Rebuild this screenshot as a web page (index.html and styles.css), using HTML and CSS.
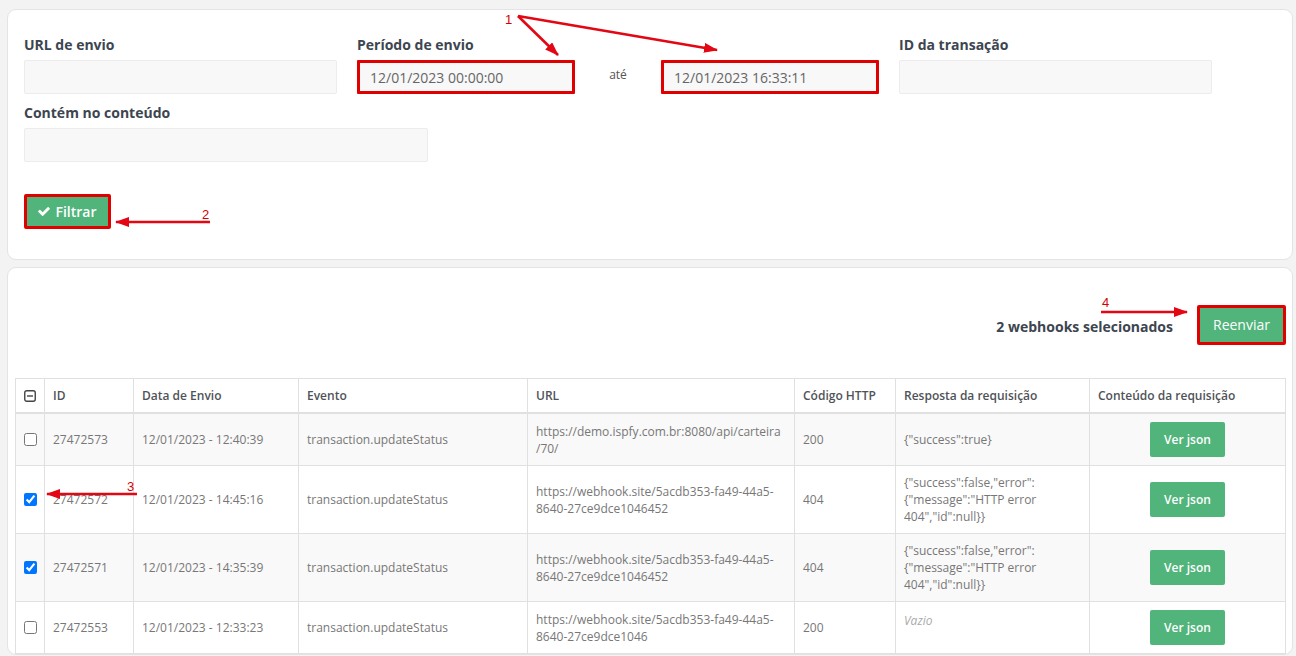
FILE: index.html
```html
<!DOCTYPE html>
<html lang="pt-BR">
<head>
<meta charset="utf-8">
<title>Webhooks</title>
<link rel="stylesheet" href="styles.css">
</head>
<body>
<div class="page">
  <section class="card filters">
    <div class="form-row">
      <div class="field">
        <label class="label">URL de envio</label>
        <input class="input" type="text">
      </div>
      <div class="field">
        <label class="label">Período de envio</label>
        <div class="period">
          <input class="input hl" type="text" value="12/01/2023 00:00:00">
          <span class="ate">até</span>
          <input class="input hl" type="text" value="12/01/2023 16:33:11">
        </div>
      </div>
      <div class="field">
        <label class="label">ID da transação</label>
        <input class="input" type="text">
      </div>
    </div>
    <div class="field field-content">
      <label class="label">Contém no conteúdo</label>
      <input class="input" type="text">
    </div>
    <button class="btn btn-filter hl" type="button"><svg class="icon-check" viewBox="121 334 1550 1188" aria-hidden="true"><path d="M1671 566q0 40-28 68l-724 724-136 136q-28 28-68 28t-68-28l-136-136-362-362q-28-28-28-68t28-68l136-136q28-28 68-28t68 28l294 295 656-657q28-28 68-28t68 28l136 136q28 28 28 68z"/></svg>Filtrar</button>
  </section>

  <section class="card results">
    <div class="actions">
      <span class="selected">2 webhooks selecionados</span>
      <button class="btn btn-resend hl" type="button">Reenviar</button>
    </div>
    <table class="grid">
      <colgroup>
        <col class="c-check"><col class="c-id"><col class="c-date"><col class="c-event"><col class="c-url"><col class="c-code"><col class="c-resp"><col class="c-body">
      </colgroup>
      <thead>
        <tr>
          <th><svg class="icon-minus" viewBox="0 0 12 12" aria-hidden="true"><rect x="0.75" y="0.75" width="10.5" height="10.5" rx="2"/><line x1="3" y1="6" x2="9" y2="6"/></svg></th>
          <th>ID</th>
          <th>Data de Envio</th>
          <th>Evento</th>
          <th>URL</th>
          <th>Código HTTP</th>
          <th>Resposta da requisição</th>
          <th>Conteúdo da requisição</th>
        </tr>
      </thead>
      <tbody>
        <tr>
          <td><input class="check" type="checkbox"></td>
          <td>27472573</td>
          <td>12/01/2023 - 12:40:39</td>
          <td>transaction.updateStatus</td>
          <td class="wrap url">https://demo.ispfy.com.br:8080/api/carteira/70/</td>
          <td>200</td>
          <td class="wrap">{"success":true}</td>
          <td class="center"><button class="btn btn-json" type="button">Ver json</button></td>
        </tr>
        <tr>
          <td><input class="check" type="checkbox" checked></td>
          <td>27472572</td>
          <td>12/01/2023 - 14:45:16</td>
          <td>transaction.updateStatus</td>
          <td class="wrap url">https://webhook.site/5acdb353-fa49-44a5-8640-27ce9dce1046452</td>
          <td>404</td>
          <td class="wrap">{"success":false,"error":{"message":"HTTP error 404","id":null}}</td>
          <td class="center"><button class="btn btn-json" type="button">Ver json</button></td>
        </tr>
        <tr>
          <td><input class="check" type="checkbox" checked></td>
          <td>27472571</td>
          <td>12/01/2023 - 14:35:39</td>
          <td>transaction.updateStatus</td>
          <td class="wrap url">https://webhook.site/5acdb353-fa49-44a5-8640-27ce9dce1046452</td>
          <td>404</td>
          <td class="wrap">{"success":false,"error":{"message":"HTTP error 404","id":null}}</td>
          <td class="center"><button class="btn btn-json" type="button">Ver json</button></td>
        </tr>
        <tr>
          <td><input class="check" type="checkbox"></td>
          <td>27472553</td>
          <td>12/01/2023 - 12:33:23</td>
          <td>transaction.updateStatus</td>
          <td class="wrap url">https://webhook.site/5acdb353-fa49-44a5-8640-27ce9dce1046</td>
          <td>200</td>
          <td class="empty"><em>Vazio</em></td>
          <td class="center"><button class="btn btn-json" type="button">Ver json</button></td>
        </tr>
      </tbody>
    </table>
  </section>

  <svg class="annotations" viewBox="0 0 1296 656" aria-hidden="true">
    <defs>
      <marker id="head" viewBox="0 0 14 10" markerWidth="14" markerHeight="10" markerUnits="userSpaceOnUse" refX="13" refY="5" orient="auto">
        <path d="M0 0 L14 5 L0 10 Z" fill="#e30613"/>
      </marker>
    </defs>
    <g class="arrows">
      <line x1="518" y1="16" x2="558" y2="55" marker-end="url(#head)"/>
      <line x1="518" y1="16" x2="717" y2="50" marker-end="url(#head)"/>
      <line x1="210" y1="222" x2="116" y2="222" marker-end="url(#head)"/>
      <line x1="137" y1="494" x2="47" y2="494" marker-end="url(#head)"/>
      <line x1="1101" y1="312" x2="1187" y2="312" marker-end="url(#head)"/>
    </g>
    <g class="nums">
      <text x="505" y="24">1</text>
      <text x="202" y="219">2</text>
      <text x="127" y="491">3</text>
      <text x="1102" y="307">4</text>
    </g>
  </svg>
</div>
</body>
</html>
```

FILE: styles.css
```css
* { box-sizing: border-box; }

html, body {
  margin: 0;
  height: 656px;
  overflow: hidden;
}

body {
  background: #f3f3f3;
  font-family: "Open Sans", "Noto Sans", sans-serif;
  color: #777;
}

.page {
  position: relative;
  padding: 9px 3px 0 7px;
  display: flex;
  flex-direction: column;
  gap: 7px;
}

.card {
  background: #fff;
  border: 1px solid #e4e4e4;
  border-radius: 9px;
}

/* ---------- filters ---------- */
.filters {
  padding: 25px 16px 30px 16px;
}

.form-row {
  display: grid;
  grid-template-columns: 313px 522px 313px;
  column-gap: 20px;
}

.field {
  display: flex;
  flex-direction: column;
}

.field-content {
  width: 404px;
  margin-top: 9px;
}

.label {
  font-size: 14px;
  font-weight: 700;
  line-height: 20px;
  color: #3d4550;
  margin-bottom: 5px;
}

.input {
  height: 34px;
  width: 100%;
  background: #f8f8f8;
  border: 1px solid #ececec;
  border-radius: 2px;
  padding: 0 10px;
  font-family: inherit;
  font-size: 14px;
  color: #666;
  outline: none;
}

.period {
  display: grid;
  grid-template-columns: 218px 1fr 218px;
  align-items: center;
}

.ate {
  justify-self: center;
  font-size: 12px;
  color: #555;
  padding-bottom: 6px;
}

.hl {
  border: 3px solid #e00000 !important;
}

.period .input.hl {
  padding-left: 10px;
  border-radius: 1px;
}

/* ---------- buttons ---------- */
.btn {
  font-family: inherit;
  background: #50b47b;
  color: #fff;
  border: none;
  border-radius: 2px;
  cursor: pointer;
  display: inline-flex;
  align-items: center;
  justify-content: center;
}

.btn-filter {
  margin-top: 32px;
  width: 87px;
  height: 35px;
  font-size: 14px;
  font-weight: 600;
  gap: 5px;
  padding: 0 0 1px 0;
}

.icon-check {
  width: 12px;
  height: 9px;
  fill: #fff;
}

.btn-resend {
  width: 89px;
  height: 40px;
  font-size: 14px;
  font-weight: 500;
  padding: 0 0 1px 0;
}

.btn-json {
  width: 75px;
  height: 35px;
  font-size: 12px;
  font-weight: 600;
}

/* ---------- results ---------- */
.results {
  padding: 37px 8px 0 7px;
}

.actions {
  display: flex;
  justify-content: flex-end;
  align-items: center;
  gap: 24px;
  margin: 0 -2px 33px 0;
}

.selected {
  font-size: 14px;
  font-weight: 700;
  color: #3d4550;
  padding-top: 2px;
}

.grid {
  width: 1270px;
  border-collapse: collapse;
  table-layout: fixed;
  font-size: 12px;
  color: #777;
}

.c-check { width: 29px; }
.c-id { width: 89px; }
.c-date { width: 165px; }
.c-event { width: 229px; }
.c-url { width: 267px; }
.c-code { width: 101px; }
.c-resp { width: 194px; }
.c-body { width: 196px; }

.grid th,
.grid td {
  border: 1px solid #e0e0e0;
  padding: 8px;
  line-height: 17px;
  text-align: left;
  vertical-align: middle;
}

.grid thead th {
  border-bottom: 2px solid #e0e0e0;
  color: #4f5358;
  font-weight: 600;
}

.grid tbody tr:nth-child(odd) {
  background: #f9f9f9;
}

.grid .wrap {
  overflow-wrap: anywhere;
}

.grid .url {
  padding-right: 12px;
}

.grid .center {
  text-align: center;
}

.grid .empty {
  vertical-align: top;
  padding-top: 10px;
  color: #aaa;
}

.icon-minus {
  display: block;
  width: 12px;
  height: 12px;
  fill: none;
  stroke: #444;
  stroke-width: 1.4;
}

.check {
  display: block;
  margin: 0;
  width: 13px;
  height: 13px;
}

/* ---------- annotations ---------- */
.annotations {
  position: absolute;
  top: 0;
  left: 0;
  width: 1296px;
  height: 656px;
  pointer-events: none;
}

.arrows line {
  stroke: #e30613;
  stroke-width: 2.6;
}

.nums text {
  font-family: "Liberation Sans", sans-serif;
  font-size: 13px;
  fill: #d40000;
}
```
